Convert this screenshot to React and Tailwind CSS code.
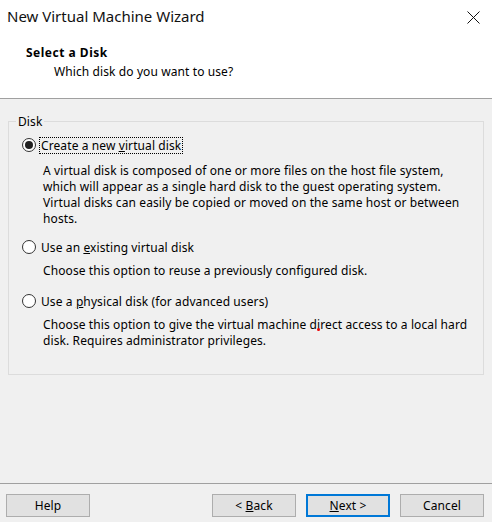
import React from "react";

function Radio({ checked }) {
  return (
    <span className="relative inline-block w-[14px] h-[14px] rounded-full border border-[#333] bg-white shrink-0">
      {checked && <span className="absolute left-[2px] top-[2px] w-[8px] h-[8px] rounded-full bg-[#222]" />}
    </span>
  );
}

function Btn({ children, primary }) {
  return (
    <div
      className={
        "w-[84px] h-[23px] flex items-center justify-center bg-[#e1e1e1] text-[12px] text-black " +
        (primary ? "border-2 border-[#0078d7]" : "border border-[#adadad]")
      }
    >
      <span>{children}</span>
    </div>
  );
}

export default function App() {
  return (
    <div
      className="w-[492px] h-[522px] bg-[#f0f0f0] flex flex-col text-[12px] tracking-[0.1px] text-black overflow-hidden relative"
      style={{ fontFamily: '"Noto Sans", "Open Sans", sans-serif' }}
    >
      <div className="bg-white h-[99px] border-b border-[#a0a0a0] relative">
        <div className="absolute left-[7px] top-[6px] text-[15px] leading-[20px] tracking-normal text-[#111]">New Virtual Machine Wizard</div>
        <svg className="absolute left-[467px] top-[11px]" width="13" height="13" viewBox="0 0 13 13">
          <path d="M0.5 0.5 L12.5 12.5 M12.5 0.5 L0.5 12.5" stroke="#111" strokeWidth="1" />
        </svg>
        <div className="absolute left-[26px] top-[45px] font-bold leading-[16px] tracking-[0.5px]">Select a Disk</div>
        <div className="absolute left-[54px] top-[64px] leading-[16px]">Which disk do you want to use?</div>
      </div>

      <div className="px-[8px] pt-[22px]">
        <div className="relative border border-[#dcdcdc] h-[254px] pl-[13px] pt-[15px]">
          <div className="absolute left-[7px] top-[-8px] bg-[#f0f0f0] px-[2px] leading-[16px]">Disk</div>
          <div className="flex items-center gap-[4px] h-[16px]">
            <Radio checked />
            <span className="outline-1 outline-dotted outline-black px-[1px] leading-[15px]">
              Create a new <u>v</u>irtual disk
            </span>
          </div>
          <div className="pl-[21px] mt-[10px] leading-[16px] w-[460px]">
            A virtual disk is composed of one or more files on the host file system,
            <br />
            which will appear as a single hard disk to the guest operating system.
            <br />
            Virtual disks can easily be copied or moved on the same host or between
            <br />
            hosts.
          </div>
          <div className="flex items-center gap-[4px] h-[16px] mt-[12px]">
            <Radio />
            <span className="leading-[15px] pl-[1px]">
              Use an <u>e</u>xisting virtual disk
            </span>
          </div>
          <div className="pl-[21px] mt-[8px] leading-[16px]">Choose this option to reuse a previously configured disk.</div>
          <div className="flex items-center gap-[4px] h-[16px] mt-[14px]">
            <Radio />
            <span className="leading-[15px] pl-[1px]">
              Use a <u>p</u>hysical disk (for advanced users)
            </span>
          </div>
          <div className="pl-[21px] mt-[8px] leading-[16px]">
            Choose this option to give the virtual machine direct access to a local hard
            <br />
            disk. Requires administrator privileges.
          </div>
        </div>
      </div>

      <div className="absolute left-0 right-0 top-[483px] border-t border-[#a0a0a0]" />
      <div className="absolute left-[6px] right-[8px] top-[494px] flex">
        <Btn>Help</Btn>
        <div className="flex-1" />
        <div className="flex gap-[10px]">
          <Btn>
            &lt;&nbsp;<u>B</u>ack
          </Btn>
          <Btn primary>
            <u>N</u>ext&nbsp;&gt;
          </Btn>
          <Btn>Cancel</Btn>
        </div>
      </div>
      <div className="absolute left-[317px] top-[328px] w-[3px] h-[3px] rounded-full bg-[#e00]" />
    </div>
  );
}
